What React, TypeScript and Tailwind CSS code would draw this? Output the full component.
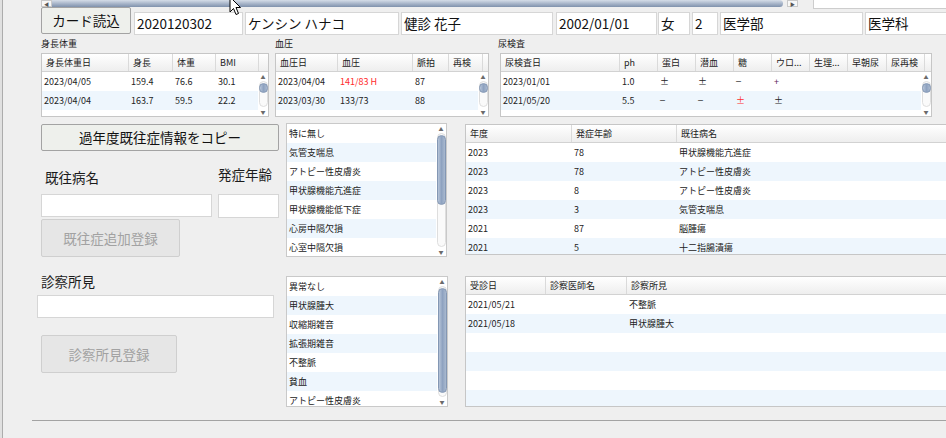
import type { ReactNode } from "react";

type Col = { label: string; w: number };

function VScroll({ thumb }: { thumb: string }) {
  return (
    <div className="flex w-[10px] shrink-0 flex-col items-center bg-white">
      <div className="h-[9px] shrink-0 text-[5px] leading-[9px] text-[#6b6b6b]">▲</div>
      <div className="flex w-[9px] flex-1 flex-col items-center rounded-full border border-[#dedede] bg-[#fafafa]">
        <div
          className={`w-[9px] shrink-0 rounded-full border border-[#8397b4] bg-gradient-to-r from-[#b6c4d8] via-[#8ea2c0] to-[#a9b9cf] ${thumb}`}
        />
      </div>
      <div className="h-[9px] shrink-0 text-[5px] leading-[9px] text-[#6b6b6b]">▼</div>
    </div>
  );
}

function Grid({
  cols,
  rows,
  thumb,
  className,
}: {
  cols: Col[];
  rows: ReactNode[][];
  thumb?: string;
  className: string;
}) {
  return (
    <div className={`flex shrink-0 flex-col overflow-hidden border border-[#c6c6c6] bg-white ${className}`}>
      <div className="flex h-[18px] shrink-0 border-b border-[#d2d2d2] bg-gradient-to-b from-white to-[#eeeeee]">
        {cols.map((c, i) => (
          <div
            key={i}
            className="flex shrink-0 items-center overflow-hidden whitespace-nowrap border-r border-[#dadada] pl-[4px] text-[9px] text-[#222]"
            style={{ width: c.w }}
          >
            {c.label}
          </div>
        ))}
        <div className="flex-1" />
      </div>
      <div className="flex min-h-0 flex-1">
        <div className="min-w-0 flex-1 overflow-hidden">
          {rows.map((r, i) => (
            <div key={i} className={`flex h-[19px] items-center text-[9px] text-[#222] ${i % 2 ? "bg-[#eef6fd]" : "bg-white"}`}>
              {r.map((cell, j) => (
                <div
                  key={j}
                  className="shrink-0 overflow-hidden whitespace-nowrap pl-[2px]"
                  style={{ width: j < cols.length ? cols[j].w : 300 }}
                >
                  {cell}
                </div>
              ))}
            </div>
          ))}
        </div>
        {thumb && <VScroll thumb={thumb} />}
      </div>
    </div>
  );
}

function ListBox({ items, thumb, className }: { items: string[]; thumb: string; className: string }) {
  return (
    <div className={`flex shrink-0 overflow-hidden border border-[#c9c9c9] bg-white ${className}`}>
      <div className="min-w-0 flex-1 overflow-hidden">
        {items.map((t, i) => (
          <div
            key={i}
            className={`h-[19px] whitespace-nowrap pl-[2px] text-[9px] leading-[19px] text-[#222] ${i % 2 ? "bg-[#eef6fd]" : "bg-white"}`}
          >
            {t}
          </div>
        ))}
      </div>
      <VScroll thumb={thumb} />
    </div>
  );
}

const Red = ({ children }: { children: ReactNode }) => <span className="text-[#ff2b2b]">{children}</span>;
const Minus = () => <span className="font-['Liberation_Sans',sans-serif]">–</span>;

export default function App() {
  const inputCls =
    "h-[23px] shrink-0 overflow-hidden whitespace-nowrap border border-[#d6d6d6] bg-white pl-[2px] text-[13.5px] leading-[21px] text-[#111]";

  return (
    <div className="relative flex h-[438px] w-[946px] overflow-hidden bg-[#efefef] font-['Noto_Sans_CJK_JP','Noto_Sans',sans-serif] text-[#1b1b1b]">
      <div className="w-[2px] shrink-0 bg-[#e0e0e0]" />
      <div className="w-px shrink-0 bg-[#acacac]" />

      <div className="flex min-w-0 flex-1 flex-col">
        {/* top scroll strip */}
        <div className="flex h-[8px] shrink-0 items-start">
          <div className="ml-[38px] flex h-[7px] w-[757px] shrink-0">
            <div className="flex w-[11px] items-center justify-center border border-[#c9c9c9] bg-[#f7f7f7] text-[5px] text-[#555]">◀</div>
            <div className="w-[731px] rounded-r-full bg-gradient-to-b from-[#d5dde8] to-[#7f91ac]" />
            <div className="ml-[4px] flex w-[11px] items-center justify-center border border-[#c9c9c9] bg-[#f7f7f7] text-[5px] text-[#555]">▶</div>
          </div>
          <div className="ml-[15px] h-[9px] flex-1 border border-r-0 border-t-0 border-[#cdcdcd] bg-white" />
        </div>

        {/* card row */}
        <div className="-mt-px ml-[38px] flex shrink-0 items-start">
          <button className="h-[27px] w-[90px] shrink-0 rounded-[2px] border border-[#a3a3a3] bg-[#eef0ec] text-[13.5px] text-[#111]">
            カード読込
          </button>
          <div className={`${inputCls} ml-[3px] mt-[5px] w-[109px]`}>2020120302</div>
          <div className={`${inputCls} ml-[2px] mt-[5px] w-[154px]`}>ケンシン ハナコ</div>
          <div className={`${inputCls} ml-[2px] mt-[5px] w-[152px]`}>健診 花子</div>
          <div className={`${inputCls} ml-[3px] mt-[5px] w-[101px]`}>2002/01/01</div>
          <div className={`${inputCls} ml-px mt-[5px] w-[32px]`}>女</div>
          <div className={`${inputCls} ml-[2px] mt-[5px] w-[26px]`}>2</div>
          <div className={`${inputCls} ml-[2px] mt-[5px] w-[143px]`}>医学部</div>
          <div className={`${inputCls} ml-[2px] mt-[5px] w-[100px]`}>医学科</div>
        </div>

        {/* measurement tables */}
        <div className="ml-[38px] mt-px flex shrink-0">
          <div className="flex w-[228px] shrink-0 flex-col">
            <div className="h-[15px] text-[9px] leading-[15px]">身長体重</div>
            <Grid
              className="mt-[2px] h-[64px] w-[228px]"
              thumb="mt-px h-[10px]"
              cols={[
                { label: "身長体重日", w: 87 },
                { label: "身長", w: 44 },
                { label: "体重", w: 43 },
                { label: "BMI", w: 43 },
              ]}
              rows={[
                ["2023/04/05", "159.4", "76.6", "30.1"],
                ["2023/04/04", "163.7", "59.5", "22.2"],
              ]}
            />
          </div>
          <div className="ml-[6px] flex w-[214px] shrink-0 flex-col">
            <div className="h-[15px] text-[9px] leading-[15px]">血圧</div>
            <Grid
              className="mt-[2px] h-[64px] w-[214px]"
              thumb="mt-px h-[10px]"
              cols={[
                { label: "血圧日", w: 62 },
                { label: "血圧", w: 75 },
                { label: "脈拍", w: 36 },
                { label: "再検", w: 34 },
              ]}
              rows={[
                ["2023/04/04", <Red>141/83 H</Red>, "87", ""],
                ["2023/03/30", "133/73", "88", ""],
              ]}
            />
          </div>
          <div className="ml-[11px] flex w-[432px] shrink-0 flex-col">
            <div className="-ml-[2px] h-[15px] text-[9px] leading-[15px]">尿検査</div>
            <Grid
              className="mt-[2px] h-[64px] w-[432px]"
              thumb="mt-px h-[10px]"
              cols={[
                { label: "尿検査日", w: 119 },
                { label: "ph", w: 38 },
                { label: "蛋白", w: 38 },
                { label: "潜血", w: 38 },
                { label: "糖", w: 38 },
                { label: "ウロ...", w: 38 },
                { label: "生理...", w: 38 },
                { label: "早朝尿", w: 39 },
                { label: "尿再検", w: 38 },
              ]}
              rows={[
                ["2023/01/01", "1.0", "±", "±", <Minus />, <span className="text-[#5c1f5c]">+</span>, "", "", ""],
                ["2021/05/20", "5.5", <Minus />, <Minus />, <Red>±</Red>, "±", "", "", ""],
              ]}
            />
          </div>
        </div>

        {/* lower area */}
        <div className="mt-[6px] flex shrink-0">
          <div className="ml-[38px] flex w-[239px] shrink-0 flex-col">
            <button className="mt-px h-[27px] w-[238px] rounded-[2px] border border-[#a3a3a3] bg-[#eef0ec] text-[13.5px] text-[#111]">
              過年度既往症情報をコピー
            </button>
            <div className="flex h-[43px] items-end text-[13.5px] leading-[20px]">
              <div className="mb-[7px] w-[177px] shrink-0 pl-[4px]">既往病名</div>
              <div className="mb-[10px] shrink-0 whitespace-nowrap">発症年齢</div>
            </div>
            <div className="flex h-[24px]">
              <div className="h-[23px] w-[171px] shrink-0 border border-[#d6d6d6] bg-white" />
              <div className="ml-[6px] h-[24px] w-[61px] shrink-0 border border-[#d6d6d6] bg-white" />
            </div>
            <button
              disabled
              className="mt-px h-[38px] w-[139px] rounded-[2px] border border-[#cfcfcf] bg-[#e6e6e6] text-[13.5px] text-[#a2a2a2]"
            >
              既往症追加登録
            </button>
            <div className="mt-[14px] h-[20px] text-[13.5px] leading-[20px]">診察所見</div>
            <div className="-ml-[4px] mt-[4px] h-[23px] w-[237px] border border-[#d6d6d6] bg-white" />
            <button
              disabled
              className="mt-[17px] h-[38px] w-[136px] rounded-[2px] border border-[#cfcfcf] bg-[#e6e6e6] text-[13.5px] text-[#a2a2a2]"
            >
              診察所見登録
            </button>
          </div>

          <div className="ml-[6px] flex w-[162px] shrink-0 flex-col">
            <ListBox
              className="h-[134px] w-[161px]"
              thumb="mt-px h-[70px]"
              items={["特に無し", "気管支喘息", "アトピー性皮膚炎", "甲状腺機能亢進症", "甲状腺機能低下症", "心房中隔欠損", "心室中隔欠損"]}
            />
            <ListBox
              className="mt-[19px] h-[131px] w-[162px]"
              thumb="mt-px h-[105px]"
              items={["異常なし", "甲状腺腫大", "収縮期雑音", "拡張期雑音", "不整脈", "貧血", "アトピー性皮膚炎"]}
            />
          </div>

          <div className="ml-[17px] flex w-[520px] shrink-0 flex-col">
            <Grid
              className="mt-px h-[131px] w-[520px]"
              cols={[
                { label: "年度", w: 106 },
                { label: "発症年齢", w: 105 },
                { label: "既往病名", w: 300 },
              ]}
              rows={[
                ["2023", "78", "甲状腺機能亢進症"],
                ["2023", "78", "アトピー性皮膚炎"],
                ["2023", "8", "アトピー性皮膚炎"],
                ["2023", "3", "気管支喘息"],
                ["2021", "87", "脳腫瘍"],
                ["2021", "5", "十二指腸潰瘍"],
              ]}
            />
            <Grid
              className="mt-[21px] h-[131px] w-[520px]"
              cols={[
                { label: "受診日", w: 80 },
                { label: "診察医師名", w: 81 },
                { label: "診察所見", w: 340 },
              ]}
              rows={[
                ["2021/05/21", "", "不整脈"],
                ["2021/05/18", "", "甲状腺腫大"],
                ["", "", ""],
                ["", "", ""],
                ["", "", ""],
                ["", "", ""],
              ]}
            />
          </div>
        </div>

        <div className="ml-[29px] mt-[13px] h-px shrink-0 bg-[#a3a3a3]" />
      </div>

      {/* mouse pointer */}
      <svg className="absolute left-[229px] top-[-4px]" width="13" height="20" viewBox="0 0 13 20">
        <path d="M1 1 L1 16 L4.5 12.5 L7 18.5 L9.5 17.5 L7 11.5 L11.5 11.5 Z" fill="#fff" stroke="#000" strokeWidth="1" strokeLinejoin="round" />
      </svg>
    </div>
  );
}
